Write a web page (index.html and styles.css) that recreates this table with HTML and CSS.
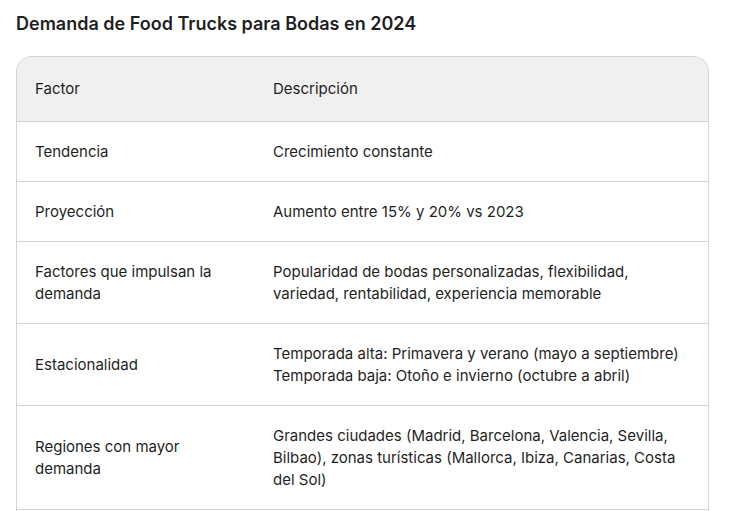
FILE: index.html
```html
<!DOCTYPE html>
<html lang="es">
<head>
<meta charset="utf-8">
<link rel="stylesheet" href="styles.css">
</head>
<body>
<h2 class="title">Demanda de Food Trucks para Bodas en 2024</h2>
<div class="table-wrap">
<table class="data">
<thead>
<tr><th>Factor</th><th>Descripción</th></tr>
</thead>
<tbody>
<tr><td>Tendencia</td><td>Crecimiento constante</td></tr>
<tr><td>Proyección</td><td>Aumento entre 15% y 20% vs 2023</td></tr>
<tr><td>Factores que impulsan la demanda</td><td>Popularidad de bodas personalizadas, flexibilidad, variedad, rentabilidad, experiencia memorable</td></tr>
<tr><td>Estacionalidad</td><td>Temporada alta: Primavera y verano (mayo a septiembre)<br>Temporada baja: Otoño e invierno (octubre a abril)</td></tr>
<tr><td>Regiones con mayor demanda</td><td>Grandes ciudades (Madrid, Barcelona, Valencia, Sevilla, Bilbao), zonas turísticas (Mallorca, Ibiza, Canarias, Costa del Sol)</td></tr>
<tr class="spacer"><td></td><td></td></tr>
</tbody>
</table>
</div>
</body>
</html>
```
FILE: styles.css
```css
html, body {
  margin: 0;
  padding: 0;
  background: #ffffff;
}
body {
  padding: 0 23px 0 16px;
  font-family: Inter, Roboto, "Liberation Sans", sans-serif;
  color: #1f1f1f;
}
.title {
  margin: 12px 0 0 0;
  font-size: 18px;
  line-height: 24px;
  font-weight: 600;
  color: #1f1f1f;
}
.table-wrap {
  margin-top: 20px;
  border: 1px solid #d3d3d3;
  border-bottom: none;
  border-radius: 16px 16px 0 0;
  overflow: hidden;
}
.data {
  width: 100%;
  border-collapse: collapse;
  font-size: 15px;
  line-height: 22px;
  color: #1f1f1f;
}
.data th,
.data td {
  text-align: left;
  vertical-align: middle;
  padding: 19px 18px 18px 18px;
}
.data th {
  font-weight: 400;
  background: #f0f0f0;
  padding: 21px 18px 21px 18px;
}
.data th:first-child,
.data td:first-child {
  width: 202px;
}
.data tbody tr {
  border-top: 1px solid #d3d3d3;
}
.data tr.spacer td {
  height: 20px;
}
```
